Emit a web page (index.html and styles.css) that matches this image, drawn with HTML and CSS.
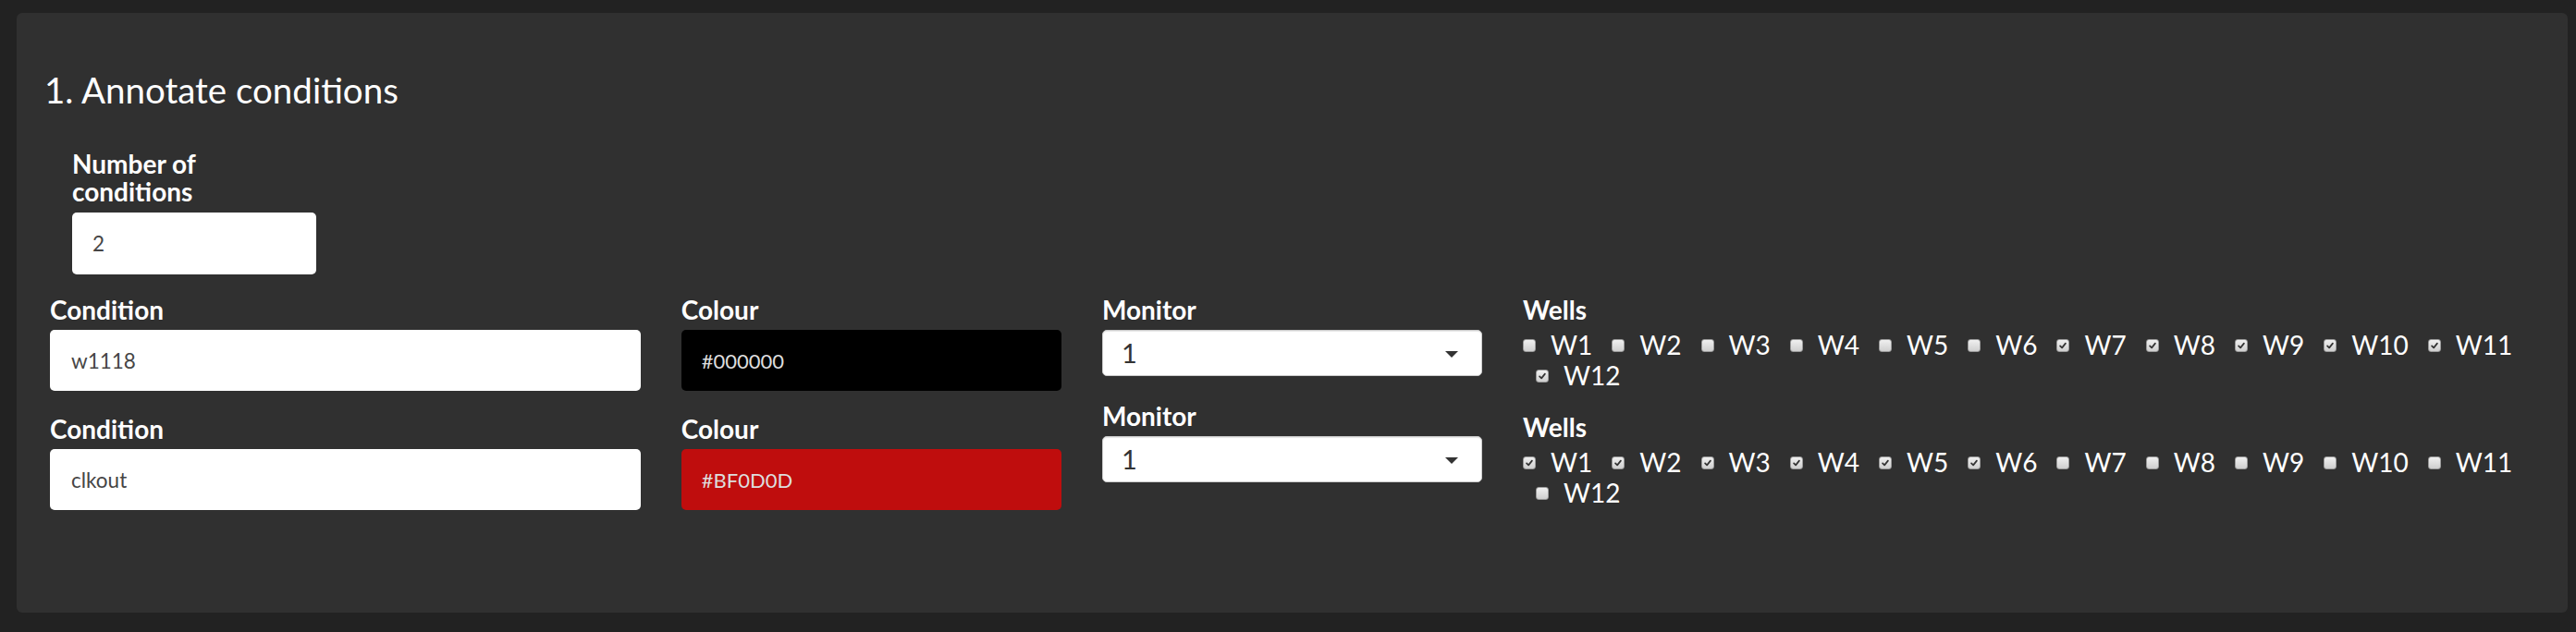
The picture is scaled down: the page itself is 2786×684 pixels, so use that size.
FILE: index.html
```html
<!DOCTYPE html>
<html lang="en">
<head>
<meta charset="utf-8">
<title>Annotate conditions</title>
<link rel="stylesheet" href="styles.css">
</head>
<body>
<div class="page">
  <div class="well">
    <h3 class="title">1. Annotate conditions</h3>
    <div class="num-group">
      <label class="lbl num-lbl">Number of conditions</label>
      <input class="txt num-input" type="text" value="2" readonly>
    </div>
    <div class="grid">
      <div class="col">
        <div class="group">
          <label class="lbl">Condition</label>
          <input class="txt" type="text" value="w1118" readonly>
        </div>
        <div class="group">
          <label class="lbl">Condition</label>
          <input class="txt" type="text" value="clkout" readonly>
        </div>
      </div>
      <div class="col">
        <div class="group">
          <label class="lbl">Colour</label>
          <input class="txt colour colour-black" type="text" value="#000000" readonly>
        </div>
        <div class="group">
          <label class="lbl">Colour</label>
          <input class="txt colour colour-red" type="text" value="#BF0D0D" readonly>
        </div>
      </div>
      <div class="col">
        <div class="group group-sel">
          <label class="lbl">Monitor</label>
          <div class="select"><span class="sel-val">1</span><span class="caret"></span></div>
        </div>
        <div class="group group-sel">
          <label class="lbl">Monitor</label>
          <div class="select"><span class="sel-val">1</span><span class="caret"></span></div>
        </div>
      </div>
      <div class="col">
        <div class="group group-wells">
          <label class="lbl">Wells</label>
          <div class="checks">
            <label class="cb"><span class="box"></span><span class="cb-text">W1</span></label>
            <label class="cb"><span class="box"></span><span class="cb-text">W2</span></label>
            <label class="cb"><span class="box"></span><span class="cb-text">W3</span></label>
            <label class="cb"><span class="box"></span><span class="cb-text">W4</span></label>
            <label class="cb"><span class="box"></span><span class="cb-text">W5</span></label>
            <label class="cb"><span class="box"></span><span class="cb-text">W6</span></label>
            <label class="cb"><span class="box on"><svg viewBox="0 0 14 14"><path d="M3.6 7.4 L6 9.8 L10.4 4.2" /></svg></span><span class="cb-text">W7</span></label>
            <label class="cb"><span class="box on"><svg viewBox="0 0 14 14"><path d="M3.6 7.4 L6 9.8 L10.4 4.2" /></svg></span><span class="cb-text">W8</span></label>
            <label class="cb"><span class="box on"><svg viewBox="0 0 14 14"><path d="M3.6 7.4 L6 9.8 L10.4 4.2" /></svg></span><span class="cb-text">W9</span></label>
            <label class="cb"><span class="box on"><svg viewBox="0 0 14 14"><path d="M3.6 7.4 L6 9.8 L10.4 4.2" /></svg></span><span class="cb-text">W10</span></label>
            <label class="cb"><span class="box on"><svg viewBox="0 0 14 14"><path d="M3.6 7.4 L6 9.8 L10.4 4.2" /></svg></span><span class="cb-text">W11</span></label>
            <label class="cb"><span class="box on"><svg viewBox="0 0 14 14"><path d="M3.6 7.4 L6 9.8 L10.4 4.2" /></svg></span><span class="cb-text">W12</span></label>
          </div>
        </div>
        <div class="group group-wells">
          <label class="lbl">Wells</label>
          <div class="checks">
            <label class="cb"><span class="box on"><svg viewBox="0 0 14 14"><path d="M3.6 7.4 L6 9.8 L10.4 4.2" /></svg></span><span class="cb-text">W1</span></label>
            <label class="cb"><span class="box on"><svg viewBox="0 0 14 14"><path d="M3.6 7.4 L6 9.8 L10.4 4.2" /></svg></span><span class="cb-text">W2</span></label>
            <label class="cb"><span class="box on"><svg viewBox="0 0 14 14"><path d="M3.6 7.4 L6 9.8 L10.4 4.2" /></svg></span><span class="cb-text">W3</span></label>
            <label class="cb"><span class="box on"><svg viewBox="0 0 14 14"><path d="M3.6 7.4 L6 9.8 L10.4 4.2" /></svg></span><span class="cb-text">W4</span></label>
            <label class="cb"><span class="box on"><svg viewBox="0 0 14 14"><path d="M3.6 7.4 L6 9.8 L10.4 4.2" /></svg></span><span class="cb-text">W5</span></label>
            <label class="cb"><span class="box on"><svg viewBox="0 0 14 14"><path d="M3.6 7.4 L6 9.8 L10.4 4.2" /></svg></span><span class="cb-text">W6</span></label>
            <label class="cb"><span class="box"></span><span class="cb-text">W7</span></label>
            <label class="cb"><span class="box"></span><span class="cb-text">W8</span></label>
            <label class="cb"><span class="box"></span><span class="cb-text">W9</span></label>
            <label class="cb"><span class="box"></span><span class="cb-text">W10</span></label>
            <label class="cb"><span class="box"></span><span class="cb-text">W11</span></label>
            <label class="cb"><span class="box"></span><span class="cb-text">W12</span></label>
          </div>
        </div>
      </div>
    </div>
  </div>
</div>
</body>
</html>
```

FILE: styles.css
```css
html, body {
  margin: 0;
  padding: 0;
}

body {
  background: #222222;
  color: #ffffff;
  font-family: Lato, "Noto Sans", sans-serif;
}

.page {
  padding: 14px 9px 21px 18px;
}

.well {
  background: #303030;
  border-radius: 6px;
  height: 649px;
  box-sizing: border-box;
  padding: 62px 14px 0 14px;
}

.title {
  margin: 0 0 0 16px;
  font-size: 38.5px;
  line-height: 43px;
  font-weight: 400;
  color: #ffffff;
}

.num-group {
  margin: 43px 0 0 46px;
  width: 264px;
}

.lbl {
  display: block;
  font-size: 28px;
  line-height: 30px;
  font-weight: 700;
  color: #ffffff;
  margin-bottom: 7px;
}

.num-lbl {
  width: 200px;
  margin-bottom: 8px;
}

.txt {
  display: block;
  width: 100%;
  box-sizing: border-box;
  height: 66px;
  border: none;
  border-radius: 5px;
  background: #ffffff;
  color: #464545;
  font-family: Lato, "Noto Sans", sans-serif;
  font-size: 22.5px;
  padding: 0 0 0 23px;
  margin: 0;
  outline: none;
}

.num-input {
  height: 67px;
  padding-left: 22px;
}

.colour {
  color: #dddddd;
  font-size: 22px;
  padding-left: 22px;
}

.colour-black {
  background: #000000;
}

.colour-red {
  background: #bf0d0d;
}

.grid {
  display: grid;
  grid-template-columns: 3fr 2fr 2fr 5fr;
  margin-top: 23px;
}

.col {
  padding: 0 22px;
  min-width: 0;
}

.group {
  margin-bottom: 26px;
}

.group-sel {
  margin-bottom: 28px;
}

.group-wells {
  margin-bottom: 24px;
}

.select {
  display: flex;
  align-items: center;
  justify-content: space-between;
  height: 50px;
  box-sizing: border-box;
  background: #ffffff;
  border: 1px solid #cccccc;
  border-radius: 5px;
  padding: 0 25px 0 20px;
  color: #333333;
  box-shadow: inset 0 1px 1px rgba(0, 0, 0, 0.1);
}

.sel-val {
  font-size: 29px;
  line-height: 34px;
}

.caret {
  width: 0;
  height: 0;
  border-left: 7.5px solid transparent;
  border-right: 7.5px solid transparent;
  border-top: 7.5px solid #333333;
  margin-top: 2px;
}

.checks {
  display: flex;
  flex-wrap: wrap;
  column-gap: 7px;
  font-size: 28px;
  line-height: 33px;
}

.cb {
  display: flex;
  align-items: center;
  margin-left: 14px;
  white-space: nowrap;
}

.cb:first-child {
  margin-left: 0;
}

.box {
  width: 14px;
  height: 14px;
  box-sizing: border-box;
  border: 1px solid #9a9a9a;
  border-radius: 3px;
  background: linear-gradient(#f0f0f0, #cfcfcf);
  margin-right: 16px;
  margin-top: 1px;
  flex: none;
  display: flex;
}

.box svg {
  width: 12px;
  height: 12px;
  fill: none;
  stroke: #333333;
  stroke-width: 2;
  stroke-linecap: round;
  stroke-linejoin: round;
}

.cb-text {
  color: #ffffff;
}
```
